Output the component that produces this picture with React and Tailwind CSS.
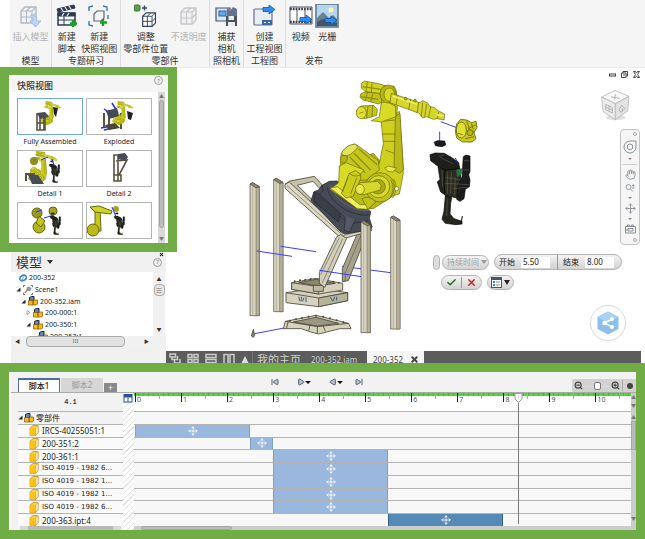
import React from "react";
import { Play, SkipBack, SkipForward, Hand, Move, Search, ZoomIn, ZoomOut, Check, X } from "lucide-react";

const CJK = "font-['Noto_Sans','Noto_Sans_CJK_SC',sans-serif]";

/* ---------- model drawings (shared by the viewport and the thumbnails) ---------- */

function Post({ x, y, h }) {
  return (
    <g stroke="#4b4738" strokeWidth="2" strokeLinejoin="round">
      <path d={`M${x} ${y + 4}L${x + 8} ${y}L${x + 28} ${y + 12}V${y + h}H${x}Z`} fill="#d8d4c0" />
      <path d={`M${x + 18} ${y + 14}H${x + 28}V${y + h}H${x + 18}Z`} fill="#b5b19a" strokeWidth="1.2" />
      <path d={`M${x + 8} ${y + 10}V${y + h}`} strokeWidth="1.2" stroke="#8d8973" />
      <path d={`M${x} ${y + 4}L${x + 8} ${y}L${x + 28} ${y + 12}L${x + 17} ${y + 15}Z`} fill="#8b8770" />
    </g>
  );
}

function Stand() {
  return (
    <g stroke="#4b4738" strokeWidth="2.5" strokeLinejoin="round">
      <path d="M353 488L372 505L366 528L325 632L307 635V596Z" fill="#a5a18a" />
      <path d="M362 498L316 608V634" fill="none" strokeWidth="1.5" />
      <path d="M135 343L150 333L223 319L246 344L240 356L219 334L172 346L232 404L222 416Z" fill="#c6c2ab" />
      <path d="M135 343L148 336L312 488L395 468V482L310 506L298 500L135 355Z" fill="#dcd8c4" />
      <path d="M140 346L310 497L392 476" fill="none" strokeWidth="1.5" />
      <path d="M290 500L302 494L320 505L254 652L238 640V608Z" fill="#d3cfba" />
      <path d="M308 506L246 640M298 503L242 614" fill="none" strokeWidth="1.5" />
    </g>
  );
}

function Turret() {
  return (
    <g stroke="#2a2c34" strokeWidth="2.5" strokeLinejoin="round">
      <path d="M213 392L222 365L236 360L246 346L268 334L292 333L300 352L392 425L388 445L396 470L386 480L314 492L300 484Z" fill="#474b57" />
      <path d="M246 346L250 362L236 376L240 388L328 462L384 452" fill="none" />
      <path d="M222 366L240 374L300 430L296 456L222 396Z" fill="#3a3e49" />
      <path d="M300 430L316 442L312 480L328 486L346 450" fill="#555967" />
      <path d="M272 345C280 392 350 430 392 420" fill="none" stroke="#6a6e7c" />
      <path d="M262 352C270 404 342 442 388 434" fill="none" />
    </g>
  );
}

function Arm() {
  return (
    <g stroke="#66660c" strokeWidth="2" strokeLinejoin="round">
      <path d="M300 290L400 250L470 330L440 390L400 416L350 412L272 358L298 338Z" fill="#b9ba18" />
      <path d="M423 150L470 130L478 124L488 260L490 310L478 372L462 376L440 390L410 380L400 300L418 280L430 220Z" fill="#cfd01e" />
      <path d="M466 140L462 300L478 310L490 300L480 130Z" fill="#b9ba18" />
      <path d="M428 192H468M430 214H466M436 240L462 250" fill="none" />
      <path d="M304 250L322 230L344 222L358 230L415 272L418 300L380 330L330 330L300 290Z" fill="#c6c71b" />
      <path d="M304 250Q318 268 342 244Q360 232 346 222Q318 224 304 250Z" fill="#e3e35a" />
      <path d="M342 250L392 300M356 236L412 284M330 262L376 308" fill="none" stroke="#8f9012" strokeWidth="4" />
      <path d="M298 288L318 278L372 300L350 326L330 380L348 412L270 358L296 338Z" fill="#d9da24" />
      <path d="M270 354L292 350L360 404L400 404L384 418L352 416Z" fill="#efef5c" />
      <path d="M304 256Q296 274 308 280Q324 276 322 258Z" fill="#b3b416" />
      <circle cx="420" cy="352" r="44" fill="#c1c21a" />
      <circle cx="416" cy="350" r="33" fill="#dadb2a" />
      <circle cx="414" cy="350" r="22" fill="#a9aa14" />
      <path d="M452 330Q468 352 450 384M460 326Q478 352 458 384" fill="none" />
      <path d="M328 310L346 302L362 312V326L340 378L318 384L304 370Z" fill="#cbcc1c" />
      <path d="M328 310Q344 324 362 314M324 322L308 366M350 324L332 372" fill="none" />
      <path d="M348 350L362 338L412 334L424 346L420 360L372 374L352 370Z" fill="#d6d72b" />
      <ellipse cx="360" cy="358" rx="13" ry="15" fill="#e8e84a" />
      <path d="M434 294L446 288L470 294L458 306L444 304Z" fill="#e8e84a" />
      <path d="M366 386Q386 374 408 396L384 418Z" fill="#c1c21a" />
      <circle cx="470" cy="356" r="6" fill="#fff" />
      {/* upper arm and motors */}
      <path d="M364 40L374 33L420 42L444 50L430 74L376 64L364 54Z" fill="#d3d41f" />
      <path d="M362 72L372 66L416 70L436 88L416 102L370 90L360 82Z" fill="#c1c21a" />
      <path d="M382 36L378 64M396 40L394 68M382 68L376 92M398 72L392 96" fill="none" />
      <path d="M368 50L424 58M364 80L414 88" fill="none" strokeWidth="4" stroke="#8f9012" />
      <path d="M424 96L432 50L462 48L470 66L472 118L466 150L424 154Z" fill="#c9ca1d" />
      <path d="M394 152L418 140L424 98L438 94L466 108L468 140L424 156Z" fill="#d9da24" />
      <path d="M350 122L362 108L400 106L412 118L410 136L376 146L356 140Z" fill="#c6c71b" />
      <ellipse cx="364" cy="128" rx="15" ry="18" fill="#dfe033" />
      <path d="M358 130L370 126M384 108L380 144M398 106L396 140" fill="none" />
      <ellipse cx="444" cy="72" rx="24" ry="27" fill="#b5b617" />
      <ellipse cx="448" cy="74" rx="16" ry="20" fill="#d9da24" />
      <path d="M454 70L540 98L548 92L562 98L570 110L582 112L594 122L614 132L612 150L592 146L580 148L560 140L548 144L538 130L450 98Z" fill="#d6d72b" />
      <path d="M474 76L468 104M512 88L506 118M536 96L532 128M548 98L544 140M560 102L554 140M572 110L566 142M596 126L592 146" fill="none" />
      <path d="M458 78L530 102M590 134L610 138" fill="none" stroke="#f0f06a" strokeWidth="5" />
      <circle cx="497" cy="86" r="4" fill="#b5b617" />
      <circle cx="525" cy="92" r="4" fill="#b5b617" />
    </g>
  );
}

function Wrist() {
  return (
    <g stroke="#66660c" strokeWidth="2.5" strokeLinejoin="round">
      <path d="M650 162L662 148L680 150L694 158L708 154L711 172L702 188L708 206L696 216L668 216L650 204L646 184Z" fill="#c9ca1d" />
      <ellipse cx="664" cy="180" rx="15" ry="24" fill="#dfe033" />
      <path d="M680 152L690 182L704 186M684 176L708 164M676 206L702 200M654 190L668 194M694 160L700 178" fill="none" />
      <circle cx="690" cy="188" r="9" fill="#b5b617" />
    </g>
  );
}

function Gripper() {
  return (
    <g stroke="#050505" strokeWidth="2" strokeLinejoin="round">
      <path d="M583 216L592 212L614 213L617 225L606 230L586 227Z" fill="#1c1c20" />
      {/* mounting plate and left finger */}
      <path d="M570 254L586 249L612 250L634 262L656 278L660 300L640 308L616 302L596 290L572 272Z" fill="#1f1f1b" />
      <path d="M594 290L618 300L620 334L614 374L602 366L592 336L600 328Z" fill="#24241e" />
      {/* body */}
      <path d="M616 300L660 296L664 346L656 384L640 382L632 376L616 380L612 340Z" fill="#2b2b23" />
      {/* motor column */}
      <path d="M670 260L678 255L690 258L690 304L686 314L690 330L688 350L676 358L672 386L660 394L650 388L654 350L666 320Z" fill="#1c1c1c" />
      {/* hook */}
      <path d="M616 378H636L632 400L630 432L642 446L666 454L666 462L648 464L616 460L606 448L612 424Z" fill="#26261e" />
      <path d="M650 300L666 296L664 312L652 320Z" fill="#1d7a3a" stroke="#1d7a3a" />
      <path d="M622 306V372M634 306L632 370M646 322L644 376M616 322L662 330M616 340L686 344M640 356L682 352M622 388L620 438M672 272H688M670 300H688M600 262L640 282M606 300L608 350M596 258L612 256" fill="none" stroke="#6d6955" strokeWidth="1.600" />
      <path d="M664 456L667 438" strokeWidth="3" />
      <path d="M646 264L652 276" stroke="#2b2bff" strokeWidth="3" />
    </g>
  );
}

function Plinths() {
  const bolts = [[164, 634], [180, 631], [196, 629], [212, 627], [246, 628], [262, 631], [280, 635], [296, 638], [150, 752], [168, 748], [186, 744], [206, 740], [228, 737], [250, 740], [270, 745], [290, 751], [310, 757]];
  return (
    <g stroke="#4b4738" strokeWidth="2.5" strokeLinejoin="round">
      <path d="M138 668L230 654L323 668V692L236 710L138 698Z" fill="#d6d2be" />
      <path d="M138 668L236 684L323 668" fill="none" />
      <path d="M236 684L323 668V692L236 710Z" fill="#b8b49c" />
      <path d="M155 638L228 625L308 640V660L236 672L155 658Z" fill="#d6d2be" />
      <path d="M155 638L236 650V672L155 658Z" fill="#cbc7b0" />
      <path d="M176 638L228 628L286 640L234 648Z" fill="#8b8770" />
      <path d="M220 646H250V664H220Z" fill="#bdb9a2" />
      <path d="M136 754L228 736L326 760L333 776L300 776L236 792L212 786L184 776L130 776Z" fill="#d6d2be" />
      <path d="M160 756L228 742L296 760L232 768Z" fill="#9b9780" />
      <path d="M136 754L232 770L326 760M232 770V790M210 766L206 782M250 768L256 784M144 756L140 774" fill="none" />
      <path d="M34 798L40 778L44 796L40 802Z" fill="#8b8770" />
      <path d="M176 680L180 694M184 680V694M192 682L188 694M198 682V696M272 682L278 694M284 680L280 692M290 680V692" stroke="#2e5f92" strokeWidth="3" />
      {bolts.map(([x, y]) => <circle key={`${x}-${y}`} cx={x} cy={y} r="3" fill="#4b4738" stroke="none" />)}
    </g>
  );
}

function Trails() {
  return (
    <g stroke="#3d3dff" strokeWidth="3" fill="none">
      <path d="M306 589L452 608M44 791L158 769M602 155L648 172M599 185V214" />
    </g>
  );
}

function Viewport() {
  return (
    <svg className="absolute left-[74px] top-[2px] h-[280px] w-60" viewBox="0 0 720 840" aria-label="200-352">
      <Trails />
      <Post x={30} y={338} h={399} />
      <Post x={101} y={325} h={400} />
      <path d="M50 543L156 559M122 529L228 545" stroke="#3d3dff" strokeWidth="3" />
      <Plinths />
      <Stand />
      <Turret />
      <Arm />
      <path d="M238 601L364 620" stroke="#3d3dff" strokeWidth="3" />
      <Post x={452} y={438} h={339} />
      <Post x={363} y={452} h={336} />
      <Wrist />
      <Gripper />
    </svg>
  );
}

/* ---------- ribbon ---------- */

const svgBox = "h-6 w-6";
const CubeWire = ({ c = "#33415f", fill = "#fff" }) => (
  <g fill={fill} stroke={c} strokeWidth="1.4" strokeLinejoin="round">
    <path d="M2 5L6 1H17V13L13 17H2Z" />
    <path d="M2 11H13L17 7M7.500 17V5L11.500 1M2 5H13V17M13 5L17 1" fill="none" strokeWidth="1.1" />
  </g>
);
const BlueArrow = ({ x = 10, y = 3 }) => (
  <path transform={`translate(${x} ${y})`} d="M0 2.500H6V0L12 4.500L6 9V6.500H0Z" fill="#2f8ef0" stroke="#15529c" strokeWidth=".8" />
);
const Plus = ({ x, y }) => <path transform={`translate(${x} ${y})`} d="M3 0V7M0 3.500H7" stroke="#16a321" strokeWidth="2.400" />;

const icons = {
  insert: (
    <svg className={svgBox} viewBox="0 0 24 24"><g transform="translate(1 2)"><CubeWire c="#b3b9c4" fill="#f0f2f5" /></g><path d="M13 11Q19 11 19 17H23L17.500 23L12 17H15V14H13Z" fill="#bcd6f2" stroke="#9dbfe4" /></svg>
  ),
  clapper: (
    <svg className={svgBox} viewBox="0 0 24 24"><path d="M3 9H20V21H3Z" fill="#f4f6f9" stroke="#2e3a55" strokeWidth="1.500" /><path d="M2 5L19 1L20 4L3 8ZM3 9H20V12H3Z" fill="#2e3a55" stroke="#2e3a55" /><path d="M6 4L8 7M10 3L12 6M14 2L16 5M7 12L9 9M12 12L14 9" stroke="#e6eaf0" strokeWidth="1.300" /><path d="M3 16H20M9 12V21" stroke="#2e3a55" /><Plus x={15} y={16} /></svg>
  ),
  snapshot: (
    <svg className={svgBox} viewBox="0 0 24 24"><path d="M6 2L2 3L2 7M16 2L20 3V7M2 17V21L6 22M21 11V15" fill="none" stroke="#4178b0" strokeWidth="1.400" /><path d="M7 10L10 7H17V14L14 17H7Z" fill="#f3f5f8" stroke="#5c6577" strokeWidth="1.200" /><Plus x={13} y={15} /></svg>
  ),
  tweak: (
    <svg className={svgBox} viewBox="0 0 24 24"><rect x="0" y="1" width="6" height="6" rx="1.500" fill="#5aa352" stroke="#2f6f2a" /><path d="M8 4H13M10.500 1.500V6.500" stroke="#3a4a6a" strokeWidth="1.500" /><g transform="translate(7 8) scale(.85)"><CubeWire /></g></svg>
  ),
  opacity: (
    <svg className={svgBox} viewBox="0 0 24 24"><g transform="translate(2 3)"><CubeWire c="#c3c6cc" fill="#f0f0f1" /></g></svg>
  ),
  camera: (
    <svg className={svgBox} viewBox="0 0 24 24"><path d="M1 4H15V17H1Z" fill="#dfe5ee" stroke="#44526e" strokeWidth="1.200" /><rect x="4" y="7" width="7" height="5" fill="#64a8ee" stroke="#2a62a8" /><path d="M12 3L15 7L18 3L22 5V12H12Z" fill="#66738f" /><path d="M11 12H22V22H11Z" fill="#4c5158" /><path d="M13.500 12H19V16H13.500ZM13 18H20V22H13Z" fill="#e9ebee" /></svg>
  ),
  drawing: (
    <svg className={svgBox} viewBox="0 0 24 24"><rect x="2" y="5" width="18" height="16" rx="1" fill="#e9ecf1" stroke="#66708a" strokeWidth="1.200" /><path d="M10 16H20V21H10Z" fill="#3a66b0" /><path d="M12 18.500H14M16 18.500H18" stroke="#fff" /><BlueArrow x={11} y={1} /></svg>
  ),
  video: (
    <svg className={svgBox} viewBox="0 0 24 24"><path d="M1 3H23V20H1Z" fill="#fbfbfb" stroke="#50555f" /><path d="M1 5H23M1 18H23" stroke="#3c414b" strokeWidth="2.500" strokeDasharray="1.800 1" /><path d="M8 6V17M16 6V17" stroke="#50555f" /><BlueArrow x={11} y={11} /></svg>
  ),
  raster: (
    <svg className={svgBox} viewBox="0 0 24 24"><rect x="1" y="0" width="22" height="23" fill="#b5d6ea" stroke="#5b7087" strokeWidth="1.500" /><circle cx="16" cy="6" r="2.500" fill="#fff5b0" /><path d="M2 14L8 8L14 14L18 11L22 15V22H2Z" fill="#6b7f92" /><path d="M2 18L8 15L22 19V22H2Z" fill="#41566c" /><BlueArrow x={10} y={12} /></svg>
  ),
};

const ribbon = [
  { label: "模型", width: "w-[42px]", tools: [{ icon: "insert", lines: ["插入模型"], off: true }] },
  { label: "专题研习", width: "w-[69px]", tools: [{ icon: "clapper", lines: ["新建", "脚本"] }, { icon: "snapshot", lines: ["新建", "快照视图"] }] },
  { label: "零部件", width: "w-[89px]", tools: [{ icon: "tweak", lines: ["调整", "零部件位置"] }, { icon: "opacity", lines: ["不透明度"], off: true }] },
  { label: "照相机", width: "w-[34px]", tools: [{ icon: "camera", lines: ["捕获", "相机"] }] },
  { label: "工程图", width: "w-[42px]", tools: [{ icon: "drawing", lines: ["创建", "工程视图"] }] },
  { label: "发布", width: "w-14", tools: [{ icon: "video", lines: ["视频"] }, { icon: "raster", lines: ["光栅"] }], last: true },
];

function Ribbon() {
  return (
    <header className="flex h-[67px] pl-[10px]">
      <div className="flex flex-1 bg-[#f5f5f5] text-[9px] leading-3 text-[#333]">
        {ribbon.map((g) => (
          <section key={g.label} className={`flex flex-col whitespace-nowrap ${g.width} ${g.last ? "" : "border-r border-[#dcdcdc]"}`}>
            <div className="flex flex-1 justify-evenly">
              {g.tools.map((t) => (
                <button key={t.icon} disabled={t.off} className={`flex flex-col items-center pt-1 ${t.off ? "text-[#b4b4b4]" : ""}`}>
                  <span className="h-[27px]">{icons[t.icon]}</span>
                  {t.lines.map((l) => <span key={l}>{l}</span>)}
                </button>
              ))}
            </div>
            <h2 className="text-center">{g.label}</h2>
          </section>
        ))}
      </div>
    </header>
  );
}

/* ---------- snapshot views ---------- */

const HelpButton = () => (
  <button aria-label="?" className="flex h-[9px] w-[9px] items-center justify-center rounded-full border border-[#999] text-[6px] leading-none text-[#777]">?</button>
);

const thumbs = [
  { name: "Fully Assembled", selected: true, art: <svg viewBox="0 0 64 36"><g transform="translate(5 0) scale(.062)"><Arm /></g><path d="M19 15H27V31H19ZM22 15V31M26 15V31M19 24H27" fill="none" stroke="#5a5240" strokeWidth="1.600" /><path d="M19 14L27 13L31 18L22 20Z" fill="#474b57" /><path d="M35 8L40 9L38 18L36 15Z" fill="#222" /></svg> },
  { name: "Exploded", art: <svg viewBox="0 0 64 36"><path d="M17 14V28M22 11V28M28 12V30M34 14V30" stroke="#5a5240" strokeWidth="2" /><path d="M17 10L35 22M25 4L31 14M14 29L30 26M17 31L26 29M22 18L30 17" stroke="#2a2aff" strokeWidth="1.500" /><g transform="translate(8 0) scale(.062)"><Arm /></g><path d="M19 12L30 9L32 17L22 20Z" fill="#474b57" /><path d="M40 12L46 14L44 21L41 20Z" fill="#222" /><path d="M18 26L28 24L33 29L22 31Z" fill="#4b4738" /></svg> },
  { name: "Detail 1", art: <svg viewBox="0 0 64 36"><g transform="translate(-13 -3) scale(.085)"><Arm /></g><circle cx="16" cy="10" r="4" fill="#8d8d20" /><path d="M10 24H20L26 33H14Z" fill="#474b57" /><path d="M8 22V30M8 23H17" stroke="#5a5240" strokeWidth="2" /><g transform="translate(-19 -9) scale(.088)"><Gripper /></g><path d="M23 9L30 6M34 8L36 14" stroke="#2a2aff" /></svg> },
  { name: "Detail 2", art: <svg viewBox="0 0 64 36"><path d="M27 4H31V30H27ZM29 10L40 9L32 24M27 24H34V30H27Z" fill="none" stroke="#5a5240" strokeWidth="1.600" /><path d="M31 3L38 2L41 6L38 10L31 8Z" fill="#474b57" /></svg> },
  { name: "Detail 3", art: <svg viewBox="0 0 64 36"><circle cx="19" cy="10" r="5" fill="#9a9b1a" stroke="#66660c" /><circle cx="21" cy="24" r="6" fill="#b3b41c" stroke="#66660c" /><path d="M21 13L27 18L23 24L18 20Z" fill="#c6c71b" stroke="#66660c" /><circle cx="35" cy="8" r="4" fill="#a5a522" stroke="#66660c" /><path d="M18 9L24 7M26 15L36 12" stroke="#2a2aff" /><g transform="translate(-18 -9) scale(.088)"><Gripper /></g></svg> },
  { name: "Detail 4", art: <svg viewBox="0 0 64 36"><path d="M8 6H13L14 28H8Z" fill="#c6c71b" stroke="#66660c" /><path d="M3 4L12 3L25 8L24 11L8 9Z" fill="#d3d41f" stroke="#66660c" /><circle cx="6" cy="27" r="6" fill="#b9ba18" stroke="#66660c" /><circle cx="29" cy="6" r="3" fill="#a5a522" /><path d="M25 4L29 14" stroke="#2a2aff" /><g transform="translate(-23 -9) scale(.088)"><Gripper /></g></svg> },
];

function SnapshotPanel() {
  return (
    <section className="flex h-[185px] w-[177px] flex-col border-[9px] border-t-8 border-[#70ad47] bg-white pl-[2px]">
      <div className="flex h-[17px] shrink-0 justify-between bg-[#f5f5f5] pl-1.5 pr-[5px] pt-px">
        <h2 className="pt-[3px] text-[9px] font-medium leading-[14px] text-[#333]">快照视图</h2>
        <HelpButton />
      </div>
      <div className="flex min-h-0 flex-1">
        <div className="flex flex-1 flex-wrap content-start gap-x-[3px] overflow-hidden pl-1.5 pt-1.5">
          {thumbs.map((t) => (
            <figure key={t.name} className="h-[52px] w-[66px]">
              <button aria-label={t.name} className={`block h-[37px] w-full border bg-white ${t.selected ? "border-[#6ea6ea]" : "border-[#b5b5b5]"}`}>{t.art}</button>
              <figcaption className="text-center text-[7px] leading-[13px] text-[#222]">{t.name}</figcaption>
            </figure>
          ))}
        </div>
        <div className="mr-[3px] flex w-[7px] flex-col items-center bg-[#d8d8d8]">
          <span className="text-[5px] leading-[8px] text-[#777]">▲</span>
          <span className="w-[5px] flex-1 rounded-sm border border-[#a0a0a0] bg-[#bdbdbd]" />
          <span className="h-[15px] pt-1.5 text-[5px] leading-[8px] text-[#777]">▼</span>
        </div>
      </div>
    </section>
  );
}

/* ---------- model browser ---------- */

const AssemblyIcon = () => (
  <svg className="h-[10px] w-[10px] shrink-0" viewBox="0 0 20 20"><path d="M3 3L7 1H12V9H3Z" fill="#5f86b5" stroke="#16243c" strokeWidth="2" /><path d="M1 9H10V18H1ZM10 11L13 8H19V16L17 18H10Z" fill="#f7b91e" stroke="#8f5d00" strokeWidth="1.500" /></svg>
);
const Twisty = ({ open, size = "h-[5px] w-[5px]" }) => (
  <svg className={`${size} shrink-0`} viewBox="0 0 10 10"><path d={open ? "M9 1V9H1Z" : "M2 1L8 5L2 9Z"} fill={open ? "#222" : "#fff"} stroke={open ? "none" : "#888"} strokeWidth="1.500" /></svg>
);
const tree = [
  { pad: "pl-[7px]", text: "200-352", icon: <svg className="h-2 w-[9px]" viewBox="0 0 18 16"><ellipse cx="10" cy="8" rx="7" ry="5" fill="none" stroke="#3f7fc2" strokeWidth="3" transform="rotate(-25 10 8)" /><path d="M2 6L8 13L11 5" fill="none" stroke="#6fa3d8" strokeWidth="2" /></svg> },
  { pad: "pl-[5px]", mark: true, open: true, text: "Scene1", icon: <svg className="h-[10px] w-[10px]" viewBox="0 0 22 22"><path d="M5 1H1V5M17 1H21V5M1 17V21H5M21 17V21H17" fill="none" stroke="#555" strokeWidth="1.800" /><path d="M4 18L10 10" stroke="#e0701c" strokeWidth="3" /><path d="M9 6L14 4L18 8L15 13L9 11Z" fill="#8aa0b8" stroke="#4b5563" /></svg> },
  { pad: "pl-[10px]", mark: true, open: true, text: "200-352.iam", icon: <AssemblyIcon /> },
  { pad: "pl-[15px]", mark: true, text: "200-000:1", icon: <AssemblyIcon /> },
  { pad: "pl-[15px]", mark: true, open: true, text: "200-350:1", icon: <AssemblyIcon /> },
  { pad: "pl-[27px]", text: "200-257:1", icon: <AssemblyIcon /> },
];

function ModelPanel() {
  return (
    <section className="ml-[11px] flex h-[111px] w-[155px] flex-col bg-[#f0f0f0]">
      <div className="relative flex h-5 items-center justify-between pl-[5px] pr-1">
        <button className="flex items-center gap-[5px] text-[13px] leading-5 text-[#333]">
          模型 <span className="h-0 w-0 border-x-[3px] border-t-4 border-x-transparent border-t-[#333]" />
        </button>
        <button aria-label="close" className="absolute right-[2px] top-0"><X size={5} strokeWidth={5} color="#111" /></button>
        <HelpButton />
      </div>
      <div className="flex h-16 bg-white">
        <ul className="flex-1 overflow-hidden text-[7px] text-[#222]">
          <li className="flex h-[70px] flex-col">
            {tree.map((n) => (
              <div key={n.text} className={`flex flex-1 items-center gap-[2px] ${n.pad}`}>
                {n.mark && <Twisty open={n.open} />}
                {n.icon}
                <span className="leading-[11px]">{n.text}</span>
              </div>
            ))}
          </li>
        </ul>
        <div className="mr-px flex w-[12px] flex-col items-center justify-between bg-[#f1f1f1] py-[2px]">
          <span className="text-[5px] leading-[10px] text-[#333]">▲</span>
          <span className="mb-auto flex h-3 w-[11px] items-center justify-center rounded-sm border border-[#aaa] bg-[#e6e6e6] text-[7px] leading-none text-[#666]">≡</span>
          <span className="text-[5px] leading-[10px] text-[#333]">▼</span>
        </div>
      </div>
      <div className="mr-[13px] flex h-[11px] items-center gap-[6px] bg-[#f1f1f1] pl-1 pr-1 text-[5px] text-[#333]">
        ◀<span className="flex h-[11px] w-[99px] items-center justify-center rounded-sm border border-[#aaa] bg-[#e2e2e2] text-[6px] text-[#777]">III</span>
        <span className="ml-auto">▶</span>
      </div>
    </section>
  );
}

/* ---------- canvas ---------- */

function ViewCube() {
  return (
    <svg className="h-8 w-8" viewBox="0 0 96 96"><ellipse cx="50" cy="86" rx="30" ry="8" fill="#e0e0e0" /><g stroke="#aaa" strokeWidth="2" strokeLinejoin="round"><path d="M48 4L90 22L49 44L8 24Z" fill="#f6f6f6" /><path d="M8 24L49 44V92L12 68Z" fill="#ececec" /><path d="M90 22L49 44V92L86 66Z" fill="#e2e2e2" /></g><g stroke="#b4b4b4" strokeWidth="3" fill="none"><path d="M36 24L62 28M50 16L46 30M20 46L40 56V72L20 62ZM30 50V66M20 54L40 64M60 62L68 50L78 58L66 70ZM70 58V68" /></g></svg>
  );
}

function NavBar() {
  const dot = <span className="h-[4px] w-[4px] self-end rounded-full border border-[#aaa]" />;
  const tri = <span className="h-0 w-0 border-x-2 border-t-2 border-x-transparent border-t-[#888]" />;
  return (
    <nav className="absolute right-[5px] top-[61px] flex h-[116px] w-5 flex-col items-center justify-between rounded border border-[#c4c4c4] bg-[#f5f5f5] p-[2px] text-[#8a8f98]">
      {dot}
      <button aria-label="wheel"><svg className="h-3.5 w-3.5" viewBox="0 0 28 28" fill="none" stroke="currentColor" strokeWidth="2"><path d="M14 2H26V14A12 12 0 1 1 14 2Z" /><path d="M9 10L14 8L19 10V17L14 20L9 17Z" /></svg></button>
      {tri}
      <span className="h-px w-[14px] bg-[#ccc]" />
      <button aria-label="pan"><Hand size={11} strokeWidth={2} /></button>
      <button aria-label="zoom"><svg className="h-[10px] w-[10px]" viewBox="0 0 20 20" fill="none" stroke="currentColor" strokeWidth="1.800"><circle cx="7" cy="8" r="5" /><path d="M11 12L16 17M14 5H19M16.500 2.500V7.500M14 10H19" /></svg></button>
      {tri}
      <button aria-label="orbit"><Move size={11} strokeWidth={2} /></button>
      {tri}
      <button aria-label="look"><svg className="h-[10px] w-[11px]" viewBox="0 0 22 20" fill="none" stroke="currentColor" strokeWidth="2"><path d="M1 5H21V18H1ZM5 5V2H9V5M13 5V2H17V5M6 9H16V14H6ZM1 12H6" /></svg></button>
      {dot}
    </nav>
  );
}

const pill = "flex items-center border border-[#b4b4b4] bg-linear-to-b from-[#f4f4f4] to-[#d2d2d2]";

function MiniToolbar() {
  return (
    <form className="absolute left-[267px] top-[186px] flex flex-col gap-[5px] text-[8px] text-[#222]">
      <div className="flex items-center gap-[2px]">
        <span className="h-[15px] w-[7px] rounded-sm border border-[#b4b4b4] bg-[#dcdcdc]" />
        <div className={`${pill} h-[15px] w-[47px] rounded-full pl-1 text-[#a0a0a0]`}>
          <select aria-label="持续时间" className="w-[34px] appearance-none bg-transparent text-[8px]"><option>持续时间</option></select>
          <span className="h-0 w-0 border-x-[3px] border-t-4 border-x-transparent border-t-[#999]" />
        </div>
        <div className={`${pill} ml-[3px] h-4 w-32 gap-[6px] rounded-full pl-[4px]`}>
          <label htmlFor="t0">开始</label>
          <input id="t0" defaultValue="5.50" className="h-[11px] w-[29px] bg-white pl-[2px] text-[8px]" />
          <span className="ml-px h-3.5 w-px bg-[#999]" />
          <label htmlFor="t1" className="-ml-px">结束</label>
          <input id="t1" defaultValue="8.00" className="h-[11px] w-[29px] bg-white pl-[2px] text-[8px]" />
        </div>
      </div>
      <div className="flex gap-[5px] pl-2">
        <div className={`${pill} h-[15px] w-[41px] rounded-full`}>
          <button type="button" aria-label="ok" className="flex flex-1 justify-center border-r border-[#999]"><Check size={11} strokeWidth={3} color="#1e6b1e" /></button>
          <button type="button" aria-label="cancel" className="flex flex-1 justify-center"><X size={11} strokeWidth={3} color="#c81e1e" /></button>
        </div>
        <button type="button" aria-label="options" className={`${pill} h-[15px] w-[27px] gap-[2px] rounded-full pl-[3px]`}>
          <svg className="h-[11px] w-[11px]" viewBox="0 0 22 22"><rect x="1" y="1" width="20" height="20" fill="#fff" stroke="#46546c" strokeWidth="2" /><path d="M1 4H21" stroke="#46546c" strokeWidth="4" /><path d="M4 10H8M4 16H8" stroke="#2f7fe0" strokeWidth="4" /><path d="M10 10H18M10 16H18" stroke="#888" strokeWidth="2" /></svg>
          <span className="h-0 w-0 border-x-[3px] border-t-[5px] border-x-transparent border-t-[#222]" />
        </button>
      </div>
    </form>
  );
}

function Canvas() {
  return (
    <main className="relative flex-1 border-t border-[#ebebeb] bg-white">
      <Viewport />
      <div className="absolute right-[5px] top-[3px] flex gap-[5px] text-[#444]">
        <svg className="h-[7px] w-[7px]" viewBox="0 0 14 14"><rect x="1" y="6" width="12" height="4" fill="#fff" stroke="currentColor" strokeWidth="2" /></svg>
        <svg className="h-[7px] w-[7px]" viewBox="0 0 14 14" fill="none" stroke="currentColor" strokeWidth="2"><path d="M4 4V1H13V10H10M1 4H10V13H1ZM4 8H8" /></svg>
        <svg className="h-[7px] w-[7px]" viewBox="0 0 14 14" fill="none" stroke="currentColor" strokeWidth="2"><path d="M1 1H5L7 4L9 1H13L9 7L13 13H9L7 10L5 13H1L5 7Z" /></svg>
      </div>
      <div className="absolute right-[14px] top-[21px]"><ViewCube /></div>
      <NavBar />
      <MiniToolbar />
      <button aria-label="share" className="absolute right-[19px] top-[237px] flex h-9 w-9 items-center justify-center rounded-full border border-[#d8d8d8] bg-white">
        <svg className="h-6 w-6" viewBox="0 0 48 48"><path d="M24 1L45 12V36L24 47L3 36V12Z" fill="#8cc0ec" /><path d="M24 1L45 12L24 24L3 12Z" fill="#a6d2f5" /><path d="M32 16L17 24L32 32" fill="none" stroke="#fff" strokeWidth="3" /><g fill="#fff"><circle cx="32" cy="16" r="4" /><circle cx="17" cy="24" r="4.500" /><circle cx="32" cy="32" r="4" /></g></svg>
      </button>
    </main>
  );
}

function DocTabs() {
  const ic = "h-[11px] w-3 shrink-0";
  return (
    <div className="mr-1 flex h-3 overflow-hidden bg-[#5c5c5c] text-[8px] leading-[17px] text-[#cfcfcf]">
      <div className="flex w-[86px] shrink-0 items-start gap-[6px] pl-[3px] pt-[2px]">
        <svg className={ic} viewBox="0 0 24 22" fill="none" stroke="#ccc" strokeWidth="3"><path d="M2 2H13V8H2ZM6 8V13H17V6M11 13V20H22V12" /></svg>
        <svg className={ic} viewBox="0 0 24 22" fill="none" stroke="#ccc" strokeWidth="3"><path d="M2 3H10V9H2ZM14 3H22V9H14ZM2 13H10V19H2ZM14 13H22V19H14Z" /></svg>
        <svg className={ic} viewBox="0 0 24 22" fill="none" stroke="#ccc" strokeWidth="3"><path d="M2 3H22V9H2ZM2 13H22V19H2Z" /></svg>
        <svg className={ic} viewBox="0 0 24 22" fill="none" stroke="#ccc" strokeWidth="3"><path d="M2 22V3H10V22M14 22V3H22V22" /></svg>
        <svg className="h-[10px] w-2 shrink-0" viewBox="0 0 16 20"><path d="M8 6L15 20H1Z" fill="#ddd" /></svg>
      </div>
      <a href="#home" className="w-[58px] border-l border-[#777] pl-1 text-[11px]">我的主页</a>
      <a href="#iam" className="w-[57px] pl-[1px]">200-352.iam</a>
      <a href="#doc" className="flex w-[57px] gap-[7px] bg-[#f5f5f5] pl-[6px] text-[#444]">200-352 <X size={9} strokeWidth={5} className="mt-1" /></a>
    </div>
  );
}

/* ---------- storyboard timeline ---------- */

const UNIT = 9.285; /* one second, as a share of the track width */
const rows = [
  { name: "IRCS-40255051:1", from: 0, to: 2.5 },
  { name: "200-351:2", from: 2.5, to: 3 },
  { name: "200-361:1", from: 3, to: 5.5 },
  { name: "ISO 4019 - 1982 6...", from: 3, to: 5.5, small: true },
  { name: "ISO 4019 - 1982 1...", from: 3, to: 5.5, small: true },
  { name: "ISO 4019 - 1982 1...", from: 3, to: 5.5, small: true },
  { name: "ISO 4019 - 1982 6...", from: 3, to: 5.5, small: true },
  { name: "200-363.ipt:4", from: 5.5, to: 8, dark: true },
];

const PartIcon = () => (
  <svg className="h-[11px] w-[10px] shrink-0" viewBox="0 0 20 22"><path d="M2 6L8 1H18V15L13 21H2Z" fill="#fbd24a" stroke="#c98a12" strokeWidth="1.500" /><path d="M2 6H13V21H2Z" fill="#fdc21a" /><path d="M13 6L18 1V15L13 21Z" fill="#fff3c4" stroke="#c98a12" /></svg>
);
const PlayMenu = ({ back }) => (
  <button aria-label={back ? "play back" : "play"} className="flex items-center">
    <Play size={8} fill="#b8c4d0" color="#58646f" strokeWidth={3} className={back ? "rotate-180" : ""} />
    <span className="h-0 w-0 border-x-[3px] border-t-[3px] border-x-transparent border-t-[#111]" />
  </button>
);

function TimelineHeader() {
  return (
    <div className="flex h-5 items-end pl-[7px]">
      <button className="h-[14px] w-[42px] border border-b-0 border-t-2 border-[#4a6ea8] bg-white text-[8px] font-medium leading-3 text-[#222]">脚本1</button>
      <button className="ml-px h-[14px] w-[42px] bg-[#d6d6d6] text-[8px] leading-[14px] text-[#999]">脚本2</button>
      <button className="ml-px h-[9px] w-[13px] bg-[#8a8a8a] text-[8px] leading-[9px] text-white">+</button>
      <div className="ml-[154px] flex h-full items-center">
        <button aria-label="first" className="mr-[18px]"><SkipBack size={8} color="#58646f" fill="#b8c4d0" strokeWidth={3} /></button>
        <PlayMenu />
        <span className="w-[18px]" />
        <PlayMenu back />
        <button aria-label="last" className="ml-3"><SkipForward size={8} color="#58646f" fill="#b8c4d0" strokeWidth={3} /></button>
      </div>
      <div className="ml-auto flex h-[13px] w-16 items-center gap-[2px] bg-[#d2d2d2] px-[2px] text-[#444]">
        <button aria-label="zoom out"><ZoomOut size={9} strokeWidth={3} /></button>
        <input type="range" aria-label="zoom" defaultValue="55" className="h-2 w-6 appearance-none bg-linear-to-b from-transparent from-45% via-[#f5f5f5] via-45% to-transparent to-60% [&::-webkit-slider-thumb]:h-2 [&::-webkit-slider-thumb]:w-[7px] [&::-webkit-slider-thumb]:appearance-none [&::-webkit-slider-thumb]:rounded-xs [&::-webkit-slider-thumb]:border [&::-webkit-slider-thumb]:border-[#777] [&::-webkit-slider-thumb]:bg-white" />
        <button aria-label="zoom in"><ZoomIn size={9} strokeWidth={3} /></button>
        <span className="h-[11px] w-px bg-[#aaa]" />
        <span className="ml-[2px] h-[6px] w-[6px] rounded-full bg-[#444]" />
      </div>
    </div>
  );
}

function Ruler() {
  return (
    <div className="h-[18px] overflow-hidden bg-white">
      <div className="h-[3px] bg-[repeating-linear-gradient(90deg,#52d834_0_4px,#43ba28_4px_5px)]" />
      <div className="-mt-[3px] flex pl-px">
        {Array.from({ length: 11 }, (_, i) => (
          <div key={i} className="flex h-[9px] shrink-0 border-l border-[#222] text-[7px] leading-[13px] text-[#555]" style={{ width: `${UNIT}%` }}>
            <span className="flex-1 pl-px">{i}</span>
            <span className="h-[6px] w-1/2 border-l border-[#aaa]" />
          </div>
        ))}
      </div>
    </div>
  );
}

function Timeline() {
  return (
    <section className="flex h-44 flex-col border-[9px] border-[#70ad47] bg-[#f2f2f2]">
      <div className="flex min-h-0 flex-1 flex-col border-l-2 border-white">
        <TimelineHeader />
        <div className="flex min-h-0 flex-1 border-t border-[#aaa]">
          <div className="ml-[7px] flex w-[105px] flex-col">
            <div className="h-[18px] text-center font-['Liberation_Mono',monospace] text-[7px] font-bold leading-[18px] text-[#444]">4.1</div>
            <ul className="grid h-[115px] grid-rows-9 text-[#222]">
              <li className="flex min-h-0 items-center gap-px border-t border-[#b4b4b4] text-[8px] leading-[10px]">
                <Twisty open /><AssemblyIcon /><span className="pl-px">零部件</span>
              </li>
              {rows.map((r, i) => (
                <li key={i} className="flex min-h-0 items-center gap-[3px] border-t border-[#b4b4b4] bg-[#fafafa] pl-[11px]">
                  <PartIcon />
                  <span className={r.small ? "font-['DejaVu_Sans',sans-serif] text-[7px] leading-[11px]" : "text-[8px] leading-[11px]"}>{r.name}</span>
                </li>
              ))}
            </ul>
            <div className="mx-[2px] flex-1 border-x-8 border-[#d6d6d6] bg-[#b9b9b9]" />
          </div>
          <div className="w-[11px] bg-[repeating-linear-gradient(135deg,#fff_0_3px,#e4e4e4_3px_4px)]">
            <svg className="h-[10px] w-[10px]" viewBox="0 0 20 20"><rect x="2" y="3" width="16" height="15" fill="#fff" stroke="#29538c" strokeWidth="2" /><path d="M2 3H18V9H2Z" fill="#29538c" /><path d="M10 9V18" stroke="#29538c" strokeWidth="2" /></svg>
          </div>
          <div className="relative flex min-w-0 flex-1 flex-col">
            <Ruler />
            <div className="grid h-[115px] grid-rows-9">
              <div className="border-t border-[#b4b4b4] bg-[#f7f7f7]" />
              {rows.map((r, i) => (
                <div key={i} className="flex min-h-0 border-t border-[#b4b4b4] bg-[#f7f7f7] pl-px">
                  <div
                    className={`flex items-center justify-center border-x ${r.dark ? "border-[#35638f] bg-[#5589b6]" : "border-[#7ea0c8] bg-[#9ab8dd]"}`}
                    style={{ marginLeft: `${r.from * UNIT}%`, width: `${(r.to - r.from) * UNIT}%` }}
                  >
                    <Move size={10} color="#fff" strokeWidth={2} />
                  </div>
                </div>
              ))}
            </div>
            <div className="flex flex-1 bg-[#cdcdcd] pl-[7px]"><span className="w-[91px] rounded-sm border border-[#a5a5a5] bg-[#bbb]" /></div>
            <div className="absolute top-0 -ml-[3px] flex h-[131px] w-[9px] flex-col items-center" style={{ left: `${8.3 * UNIT}%` }}>
              <svg className="h-[10px] w-[9px]" viewBox="0 0 18 20"><path d="M2 1H16V12L9 19L2 12Z" fill="#fff" stroke="#999" strokeWidth="2" /><path d="M9 4V10" stroke="#999" /></svg>
              <span className="w-px flex-1 bg-[#777]" />
            </div>
          </div>
          <div className="flex w-[5px] flex-col items-center bg-[#cbcbcb] text-[5px] leading-[8px] text-[#777]">
            <span>▲</span><span>▼</span><span className="mt-1">▲</span>
            <span className="h-[29px] w-full border border-[#a5a5a5] bg-[#bbb]" />
            <span className="mt-auto pb-2">▼</span>
          </div>
        </div>
      </div>
    </section>
  );
}

export default function App() {
  return (
    <div className={`bg-white ${CJK}`}>
      <Ribbon />
      <div className="flex">
        <aside className="relative z-10 w-[166px] shrink-0">
          <SnapshotPanel />
          <ModelPanel />
        </aside>
        <div className="flex min-w-0 flex-1 flex-col">
          <Canvas />
          <DocTabs />
        </div>
      </div>
      <Timeline />
    </div>
  );
}
